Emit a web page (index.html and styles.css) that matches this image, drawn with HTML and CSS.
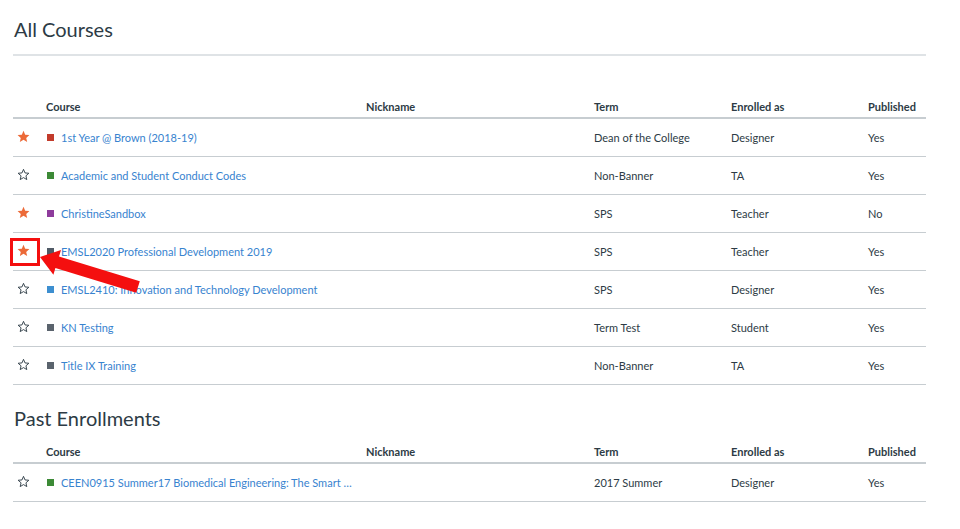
FILE: index.html
```html
<!DOCTYPE html>
<html lang="en">
<head>
<meta charset="utf-8">
<title>All Courses</title>
<link rel="stylesheet" href="styles.css">
</head>
<body>
<svg width="0" height="0" class="defs">
  <defs>
    <symbol id="star-fill" viewBox="0 0 24 24"><path d="M12 1.5l3.1 7.2 7.8.7-5.9 5.2 1.8 7.7L12 18.2l-6.8 4.1 1.8-7.7-5.9-5.2 7.8-.7z" fill="#ec6a38"/></symbol>
    <symbol id="star-line" viewBox="0 0 24 24"><path d="M12 2.5l2.8 6.6 7.1.6-5.4 4.7 1.6 7-6.1-3.7-6.1 3.7 1.6-7-5.4-4.7 7.1-.6z" fill="none" stroke="#2d3b45" stroke-width="1.7" stroke-linejoin="round"/></symbol>
  </defs>
</svg>
<main class="page">
  <h1 class="title">All Courses</h1>
  <hr class="rule">
  <table class="courses first">
    <colgroup><col class="c-star"><col class="c-course"><col class="c-nick"><col class="c-term"><col class="c-role"><col class="c-pub"></colgroup>
    <thead><tr><th></th><th>Course</th><th>Nickname</th><th>Term</th><th>Enrolled as</th><th>Published</th></tr></thead>
    <tbody>
      <tr><td class="star"><svg class="ico"><use href="#star-fill"/></svg></td><td><span class="sq red"></span><a href="#">1st Year @ Brown (2018-19)</a></td><td></td><td>Dean of the College</td><td>Designer</td><td>Yes</td></tr>
      <tr><td class="star"><svg class="ico"><use href="#star-line"/></svg></td><td><span class="sq green"></span><a href="#">Academic and Student Conduct Codes</a></td><td></td><td>Non-Banner</td><td>TA</td><td>Yes</td></tr>
      <tr><td class="star"><svg class="ico"><use href="#star-fill"/></svg></td><td><span class="sq purple"></span><a href="#">ChristineSandbox</a></td><td></td><td>SPS</td><td>Teacher</td><td>No</td></tr>
      <tr><td class="star"><svg class="ico"><use href="#star-fill"/></svg></td><td><span class="sq slate"></span><a href="#">EMSL2020 Professional Development 2019</a></td><td></td><td>SPS</td><td>Teacher</td><td>Yes</td></tr>
      <tr><td class="star"><svg class="ico"><use href="#star-line"/></svg></td><td><span class="sq blue"></span><a href="#">EMSL2410: Innovation and Technology Development</a></td><td></td><td>SPS</td><td>Designer</td><td>Yes</td></tr>
      <tr><td class="star"><svg class="ico"><use href="#star-line"/></svg></td><td><span class="sq gray"></span><a href="#">KN Testing</a></td><td></td><td>Term Test</td><td>Student</td><td>Yes</td></tr>
      <tr><td class="star"><svg class="ico"><use href="#star-line"/></svg></td><td><span class="sq gray"></span><a href="#">Title IX Training</a></td><td></td><td>Non-Banner</td><td>TA</td><td>Yes</td></tr>
    </tbody>
  </table>
  <h2 class="title sub">Past Enrollments</h2>
  <table class="courses">
    <colgroup><col class="c-star"><col class="c-course"><col class="c-nick"><col class="c-term"><col class="c-role"><col class="c-pub"></colgroup>
    <thead><tr><th></th><th>Course</th><th>Nickname</th><th>Term</th><th>Enrolled as</th><th>Published</th></tr></thead>
    <tbody>
      <tr><td class="star"><svg class="ico"><use href="#star-line"/></svg></td><td><span class="sq green"></span><a href="#">CEEN0915 Summer17 Biomedical Engineering: The Smart …</a></td><td></td><td>2017 Summer</td><td>Designer</td><td>Yes</td></tr>
    </tbody>
  </table>
</main>
<div class="callout-box"></div>
<svg class="callout-arrow" width="960" height="529" viewBox="0 0 960 529">
  <polygon points="40,257 61,249.9 59,256.6 139.8,281.3 136.2,292.7 55.4,268 53.4,274.7" fill="#f40f0f"/>
</svg>
</body>
</html>
```

FILE: styles.css
```css
html, body {
  margin: 0;
  padding: 0;
  background: #fff;
}
body {
  position: relative;
  width: 960px;
  height: 529px;
  overflow: hidden;
  font-family: Lato, "Open Sans", "Liberation Sans", sans-serif;
  color: #2d3b45;
  font-size: 11px;
}
.defs {
  position: absolute;
}
.page {
  padding: 0 34px 0 13px;
}
.title {
  margin: 0;
  padding-top: 16px;
  font-size: 20px;
  line-height: 26px;
  font-weight: 400;
  color: #2d3b45;
  padding-left: 1px;
}
.title.sub {
  padding-top: 20px;
}
.rule {
  margin: 12px 0 0;
  border: 0;
  border-top: 2px solid #dfe3e6;
  height: 0;
}
.courses {
  width: 913px;
  border-collapse: collapse;
  table-layout: fixed;
  margin-top: 10px;
}
.courses.first {
  margin-top: 40px;
}
.c-star { width: 33px; }
.c-course { width: 320px; }
.c-nick { width: 228px; }
.c-term { width: 137px; }
.c-role { width: 137px; }
.c-pub { width: 58px; }
.courses th {
  text-align: left;
  font-weight: 700;
  font-size: 11px;
  height: 21px;
  padding: 0;
  vertical-align: middle;
  border-bottom: 2px solid #c7cdd1;
  color: #2d3b45;
}
.courses td {
  height: 37px;
  padding: 0;
  vertical-align: middle;
  border-bottom: 1px solid #c7cdd1;
  white-space: nowrap;
  color: #2d3b45;
}
.courses td.star {
  padding-left: 4px;
}
.ico {
  display: block;
  width: 13px;
  height: 13px;
  margin-top: -3px;
}
.sq {
  display: inline-block;
  width: 7px;
  height: 7px;
  margin: 0 7px 0 1px;
  vertical-align: 1px;
}
.sq.red { background: #c23b2b; }
.sq.green { background: #3c8a36; }
.sq.purple { background: #8e3b9c; }
.sq.slate { background: #505a66; }
.sq.blue { background: #3d8fd0; }
.sq.gray { background: #5a636d; }
.courses a {
  color: #3883cf;
  text-decoration: none;
}
.callout-box {
  position: absolute;
  left: 10px;
  top: 238px;
  width: 24px;
  height: 22px;
  border: 3px solid #f40f0f;
}
.callout-arrow {
  position: absolute;
  left: 0;
  top: 0;
  pointer-events: none;
}
```
